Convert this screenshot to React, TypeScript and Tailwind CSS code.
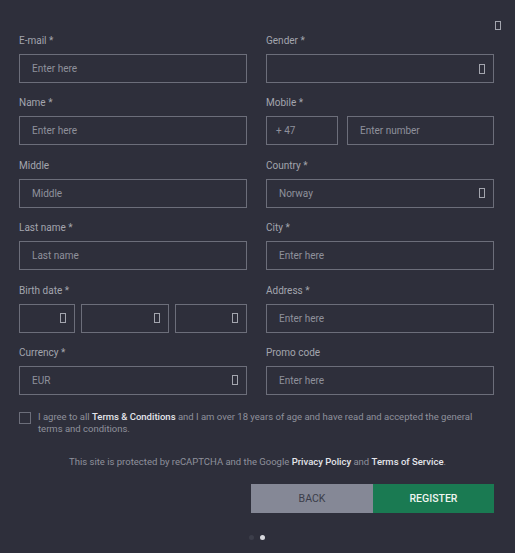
const font = { fontFamily: "Roboto, 'Liberation Sans', sans-serif" };

function Tofu({ className = "" }: { className?: string }) {
  return <span className={`inline-block h-[10px] w-[6px] border border-[#a3a5ae] ${className}`} />;
}

function Label({ children }: { children: React.ReactNode }) {
  return <div className="mb-[7px] h-[12px] text-[10px] leading-[12px] text-[#a3a5ae]">{children}</div>;
}

function Box({ text, select, className = "", pl = "pl-[12px]" }: { text?: string; select?: boolean; className?: string; pl?: string }) {
  return (
    <div className={`flex h-[29px] items-center justify-between border border-[#6c6e7a] ${pl} pr-[8px] text-[10px] text-[#8f919b] ${className}`}>
      <span>{text}</span>
      {select && <Tofu />}
    </div>
  );
}

function Field({ label, children }: { label: string; children: React.ReactNode }) {
  return (
    <div>
      <Label>{label}</Label>
      {children}
    </div>
  );
}

export default function App() {
  return (
    <div style={font} className="relative h-[553px] w-[515px] overflow-hidden bg-[#2e2f3b]">
      <div className="absolute right-[14px] top-[13px]">
        <span className="inline-block h-[9px] w-[6px] border border-[#a3a5ae]" />
      </div>
      <div className="grid grid-cols-2 gap-x-[19px] gap-y-[14.4px] pl-[19px] pr-[21px] pt-[35px]">
        <Field label="E-mail *"><Box text="Enter here" /></Field>
        <Field label="Gender *"><Box select /></Field>
        <Field label="Name *"><Box text="Enter here" /></Field>
        <Field label="Mobile *">
          <div className="flex gap-[9px]">
            <Box text="+ 47" pl="pl-[9px]" className="w-[72px]" />
            <Box text="Enter number" className="flex-1" />
          </div>
        </Field>
        <Field label="Middle"><Box text="Middle" /></Field>
        <Field label="Country *"><Box text="Norway" select /></Field>
        <Field label="Last name *"><Box text="Last name" /></Field>
        <Field label="City *"><Box text="Enter here" /></Field>
        <Field label="Birth date *">
          <div className="flex gap-[6px]">
            <Box select className="w-[56px]" />
            <Box select className="w-[88px]" />
            <Box select className="flex-1" />
          </div>
        </Field>
        <Field label="Address *"><Box text="Enter here" /></Field>
        <Field label="Currency *"><Box text="EUR" select /></Field>
        <Field label="Promo code"><Box text="Enter here" /></Field>
      </div>
      <div className="mt-[16px] flex gap-[7px] px-[19px]">
        <span className="mt-[1px] h-[12px] w-[12px] shrink-0 border border-[#6c6e7a]" />
        <p className="text-[9.5px] leading-[12px] text-[#8f919b]">
          I agree to all <span className="font-medium text-[#e4e5ea]">Terms &amp; Conditions</span> and I am over 18 years of age and have read and accepted the general terms and conditions.
        </p>
      </div>
      <p className="mt-[21px] text-center text-[9.5px] leading-[12px] text-[#8f919b]">
        This site is protected by reCAPTCHA and the Google <span className="font-medium text-[#e4e5ea]">Privacy Policy</span> and <span className="font-medium text-[#e4e5ea]">Terms of Service</span>.
      </p>
      <div className="ml-[251px] mt-[16px] flex w-[243px] text-[10.5px]">
        <div className="flex h-[29px] w-[122px] items-center justify-center bg-[#858896] text-[#3b3d4a]">BACK</div>
        <div className="flex h-[29px] flex-1 items-center justify-center bg-[#1a7a52] font-medium text-[#eef5f0]">REGISTER</div>
      </div>
      <div className="ml-[249px] mt-[22px] flex gap-[6px]">
        <span className="h-[5px] w-[5px] rounded-full bg-[#3c3e4a]" />
        <span className="h-[5px] w-[5px] rounded-full bg-[#d8d9de]" />
      </div>
    </div>
  );
}
